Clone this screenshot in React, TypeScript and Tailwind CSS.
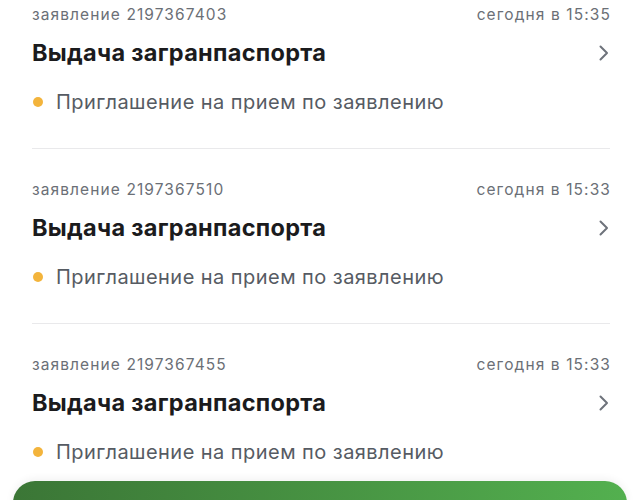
import React from "react";

const items = [
  { id: "2197367403", time: "сегодня в 15:35" },
  { id: "2197367510", time: "сегодня в 15:33" },
  { id: "2197367455", time: "сегодня в 15:33" },
];

function Chevron() {
  return (
    <svg width="10" height="16" viewBox="0 0 10 16" fill="none" className="shrink-0">
      <path d="M1.5 1.5L8 8l-6.5 6.5" stroke="#6e737b" strokeWidth="2" strokeLinecap="round" strokeLinejoin="round" />
    </svg>
  );
}

export default function App() {
  return (
    <div
      className="relative h-[500px] w-[640px] overflow-hidden bg-white"
      style={{ fontFamily: "Inter, 'Noto Sans', sans-serif" }}
    >
      <div className="mt-[-26px] pl-[32px] pr-[30px]">
        {items.map((it) => (
          <div key={it.id} className="border-b border-[#e9e9eb] pt-[31px] pb-[33px]">
            <div className="flex h-[20px] items-center justify-between text-[15.5px] tracking-[1.1px] text-[#6b6f76]">
              <span>заявление {it.id}</span>
              <span className="mr-[-1px]">{it.time}</span>
            </div>
            <div className="mt-[14px] flex h-[28px] items-center justify-between">
              <span className="text-[23.5px] font-bold tracking-[0.3px] text-[#1b1b1d]">Выдача загранпаспорта</span>
              <span className="mr-[1px]">
                <Chevron />
              </span>
            </div>
            <div className="mt-[22px] flex h-[26px] items-center gap-[13px]">
              <span className="ml-[1px] h-[10px] w-[10px] rounded-full bg-[#f3b43c]" />
              <span className="text-[20px] tracking-[0.45px] text-[#565b63]">Приглашение на прием по заявлению</span>
            </div>
          </div>
        ))}
      </div>
      <div className="absolute left-[13px] right-[13px] top-[481px] h-[60px] rounded-[22px] bg-gradient-to-r from-[#3b7636] to-[#53b04f] shadow-[0_-2px_8px_rgba(0,0,0,0.06)]" />
    </div>
  );
}
